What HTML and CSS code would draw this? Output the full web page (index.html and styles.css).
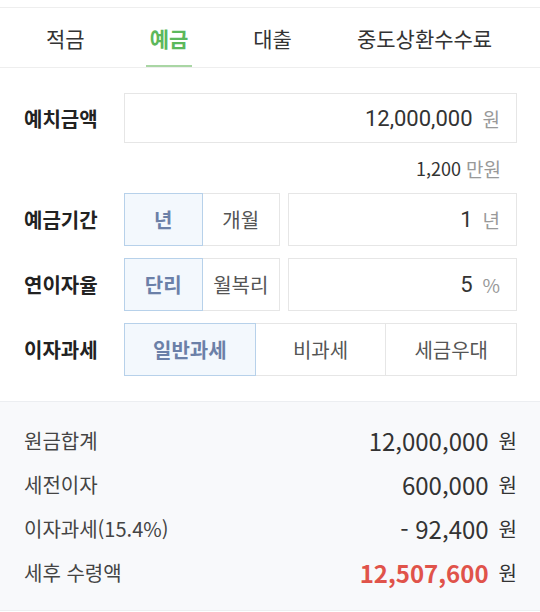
FILE: index.html
```html
<!DOCTYPE html>
<html lang="ko">
<head>
    <meta charset="UTF-8">
    <meta name="viewport" content="width=device-width, initial-scale=1.0">
    <title>예금 계산기</title>
    <link rel="stylesheet" href="styles.css">
</head>
<body>
    <nav class="tabs">
        <a class="tab">적금</a>
        <a class="tab active">예금</a>
        <a class="tab">대출</a>
        <a class="tab">중도상환수수료</a>
    </nav>

    <div class="calc-form">
        <div class="form-row first">
            <label class="row-label">예치금액</label>
            <div class="field-box wide">
                <span class="num">12,000,000</span><span class="unit">원</span>
            </div>
        </div>
        <div class="form-note">
            <span class="note-num">1,200</span><span class="note-unit">만원</span>
        </div>

        <div class="form-row">
            <label class="row-label">예금기간</label>
            <div class="seg-group two">
                <button class="seg active">년</button>
                <button class="seg">개월</button>
            </div>
            <div class="field-box">
                <span class="num">1</span><span class="unit">년</span>
            </div>
        </div>

        <div class="form-row">
            <label class="row-label">연이자율</label>
            <div class="seg-group two">
                <button class="seg active">단리</button>
                <button class="seg">월복리</button>
            </div>
            <div class="field-box">
                <span class="num">5</span><span class="unit">%</span>
            </div>
        </div>

        <div class="form-row last">
            <label class="row-label">이자과세</label>
            <div class="seg-group three">
                <button class="seg active">일반과세</button>
                <button class="seg">비과세</button>
                <button class="seg">세금우대</button>
            </div>
        </div>
    </div>

    <div class="result">
        <div class="result-row">
            <span class="result-label">원금합계</span>
            <span class="result-value">12,000,000<small>원</small></span>
        </div>
        <div class="result-row">
            <span class="result-label">세전이자</span>
            <span class="result-value">600,000<small>원</small></span>
        </div>
        <div class="result-row">
            <span class="result-label">이자과세(15.4%)</span>
            <span class="result-value">- 92,400<small>원</small></span>
        </div>
        <div class="result-row">
            <span class="result-label">세후 수령액</span>
            <span class="result-value total"><b>12,507,600</b><small>원</small></span>
        </div>
    </div>
</body>
</html>
```

FILE: styles.css
```css
* {
    box-sizing: border-box;
}

body {
    margin: 0;
    padding-top: 7px;
    background: #ffffff;
    font-family: 'Noto Sans CJK KR', 'Noto Sans', sans-serif;
    color: #333;
}

/* tab bar */
.tabs {
    display: flex;
    gap: 57px;
    height: 61px;
    padding-left: 42px;
    border-top: 1px solid #eeeeee;
    border-bottom: 1px solid #eeeeee;
}

.tab {
    display: flex;
    align-items: center;
    padding: 0 4px;
    font-size: 21px;
    color: #333;
}

.tab.active {
    color: #5cb85c;
    font-weight: 700;
    box-shadow: inset 0 -2px 0 #a9d6a4;
}

/* form */
.calc-form {
    padding: 25px 23px 0 24px;
}

.form-row {
    display: flex;
    align-items: stretch;
    height: 53px;
    margin-bottom: 12px;
}

.form-row.first {
    height: 50px;
    margin-bottom: 0;
}

.form-row.last {
    margin-bottom: 0;
}

.row-label {
    display: flex;
    align-items: center;
    width: 100px;
    flex-shrink: 0;
    font-size: 20px;
    font-weight: 700;
    color: #222;
}

.field-box {
    flex: 1;
    display: flex;
    justify-content: flex-end;
    align-items: center;
    padding-right: 16px;
    border: 1px solid #e6e6e6;
}

.seg-group.two + .field-box {
    margin-left: 8px;
}

.num {
    font-family: Roboto, 'Noto Sans', sans-serif;
    font-size: 22px;
    color: #333;
}

.unit {
    margin-left: 10px;
    font-size: 19px;
    color: #999;
}

.form-note {
    display: flex;
    justify-content: flex-end;
    align-items: center;
    height: 50px;
    padding-right: 16px;
}

.note-num {
    font-size: 18px;
    color: #333;
}

.note-unit {
    margin-left: 5px;
    font-size: 19px;
    color: #999;
}

.seg-group {
    display: flex;
}

.seg-group.two {
    width: 156px;
}

.seg-group.three {
    flex: 1;
}

.seg {
    flex: 1;
    position: relative;
    margin: 0 0 0 -1px;
    padding: 0;
    background: #fff;
    border: 1px solid #e6e6e6;
    font-family: inherit;
    font-size: 20px;
    color: #555;
}

.seg:first-child {
    margin-left: 0;
}

.seg.active {
    z-index: 1;
    background: #f3f8fd;
    border-color: #b7d1ea;
    color: #6b80a8;
    font-weight: 700;
}

/* result */
.result {
    margin-top: 25px;
    padding: 16px 23px 16px 24px;
    background: #f8f9fb;
    border-top: 1px solid #eceef1;
    border-bottom: 1px solid #eceef1;
}

.result-row {
    display: flex;
    justify-content: space-between;
    align-items: center;
    height: 44px;
}

.result-label {
    font-size: 20px;
    color: #444;
}

.result-value {
    display: flex;
    align-items: center;
    font-size: 24px;
    color: #333;
}

.result-value small {
    margin-left: 10px;
    font-size: 20px;
    color: #333;
}

.result-value.total b {
    color: #e0534a;
    font-weight: 700;
}
```
